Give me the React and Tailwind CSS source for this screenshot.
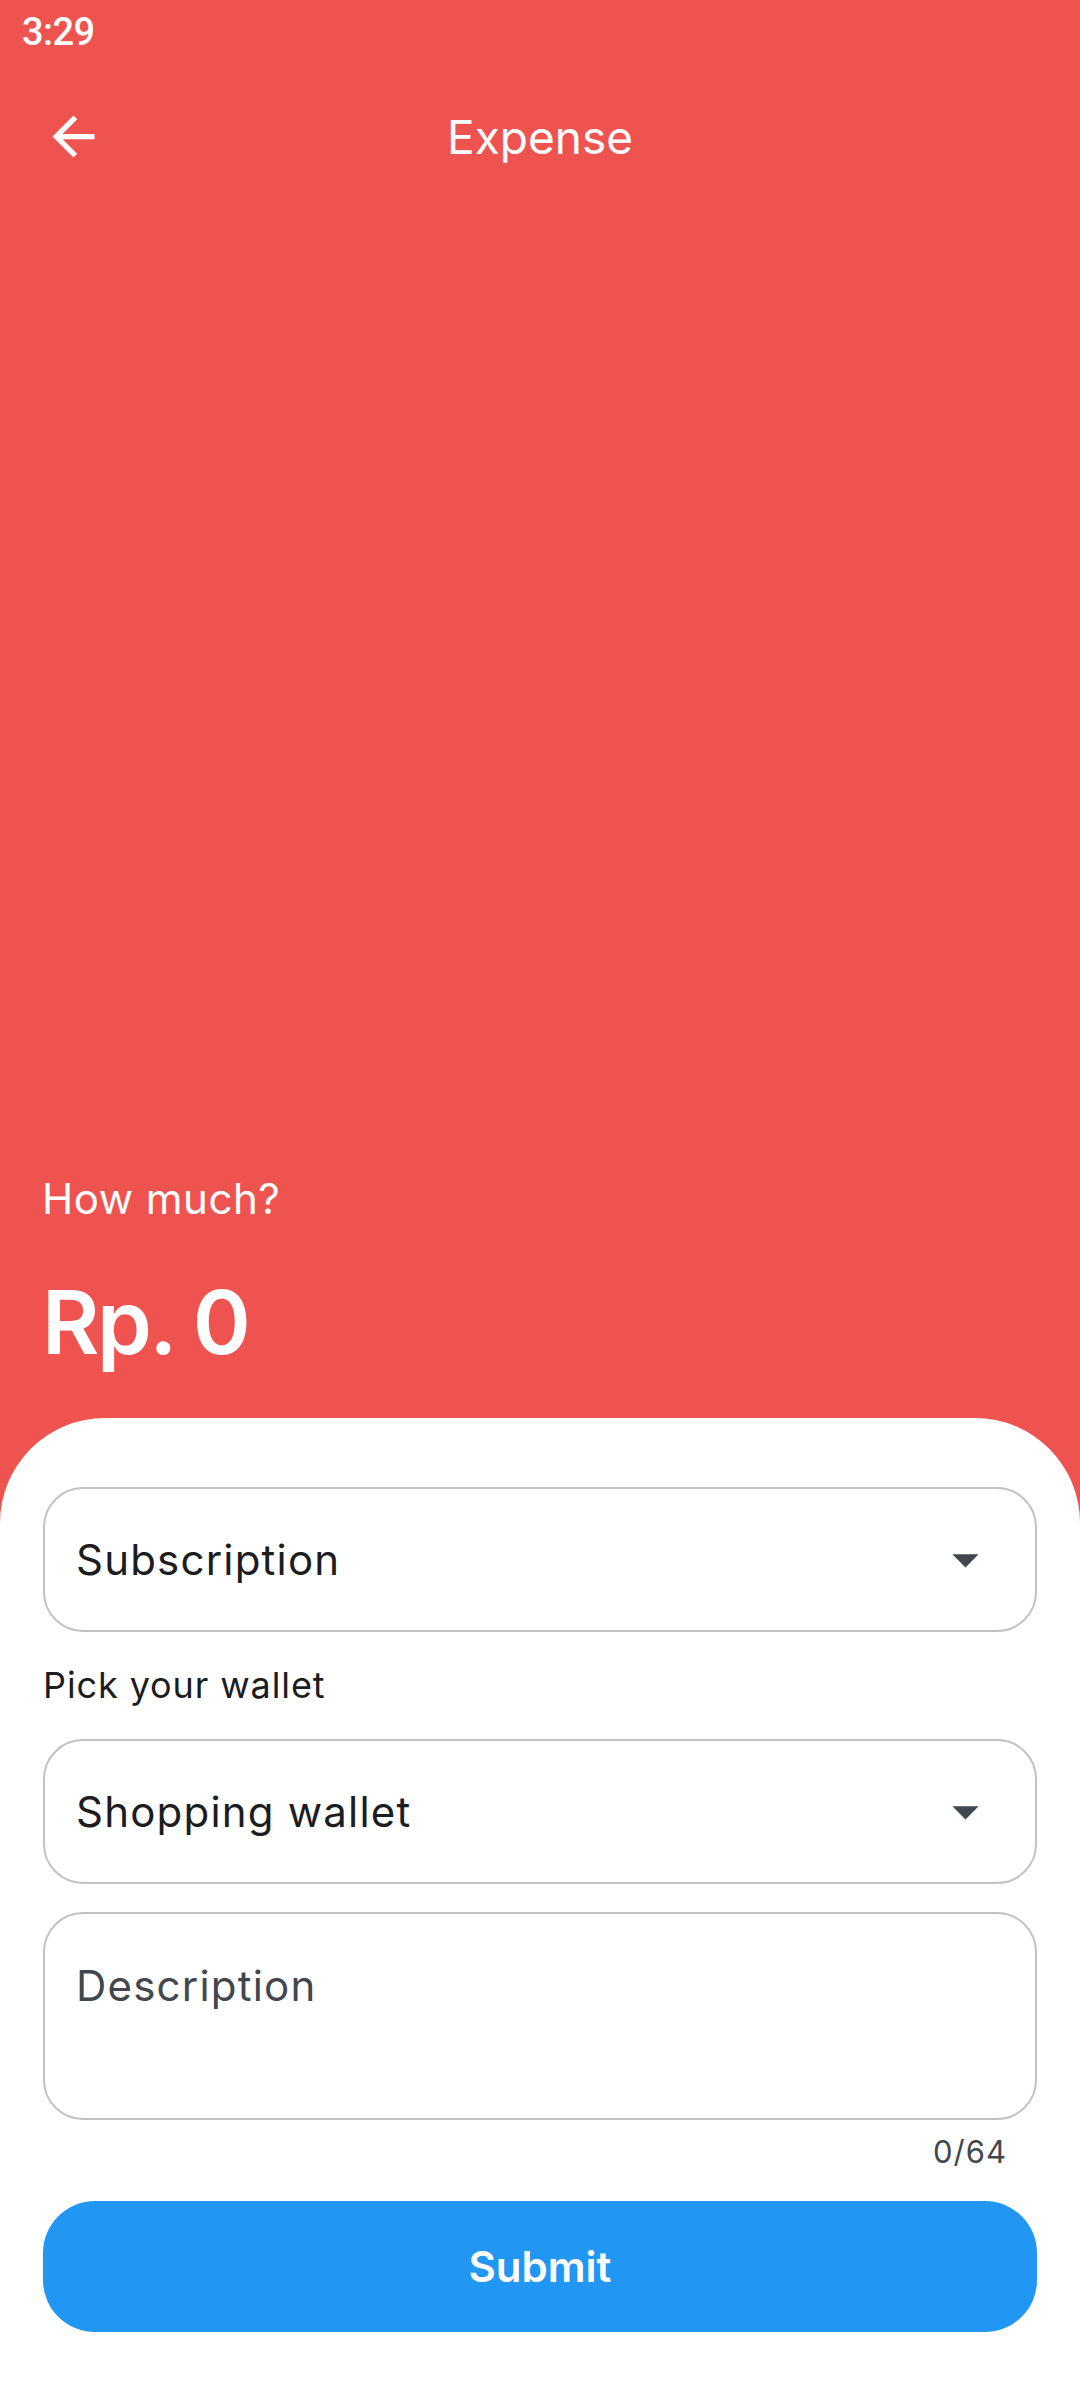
import React from "react";

function ArrowBack() {
  return (
    <svg width="63" height="63" viewBox="0 0 24 24" fill="#ffffff">
      <path d="M20 11H7.83l5.59-5.59L12 4l-8 8 8 8 1.41-1.41L7.83 13H20v-2z" />
    </svg>
  );
}

function DropArrow() {
  return (
    <svg width="63" height="63" viewBox="0 0 24 24" fill="#41484d">
      <path d="M7 10l5 5 5-5z" />
    </svg>
  );
}

function Dropdown({ label }) {
  return (
    <div className="h-[145px] border-[2.5px] border-[#c2c2c2] rounded-[40px] flex items-center justify-between pl-[31px] pr-[38px]">
      <span className="text-[42px] leading-[50px] tracking-[1.2px] text-[#1b1d1f]">{label}</span>
      <DropArrow />
    </div>
  );
}

export default function App() {
  return (
    <div className="w-[1080px] h-[2400px] flex flex-col bg-[#ef5350] overflow-hidden font-['Inter',sans-serif]">
      {/* status bar */}
      <div className="h-[63px] pl-[22px] pt-[12px] shrink-0">
        <span className="font-['Roboto',sans-serif] text-[38px] leading-[40px] font-medium tracking-[-0.6px] text-white">3:29</span>
      </div>
      {/* app bar */}
      <div className="h-[147px] shrink-0 grid grid-cols-[147px_1fr_147px] items-center">
        <div className="pl-[42px] flex items-center">
          <ArrowBack />
        </div>
        <div className="text-center text-white text-[46px] leading-[56px]">Expense</div>
        <div />
      </div>
      <div className="flex-1" />
      {/* amount */}
      <div className="px-[42px] pb-[43px] shrink-0 text-white">
        <div className="text-[42px] leading-[50px] tracking-[0.5px]">How much?</div>
        <div className="mt-[45px] text-[88px] leading-[106px] font-semibold tracking-[-2.5px]">Rp. 0</div>
      </div>
      {/* sheet */}
      <div className="shrink-0 bg-white rounded-t-[105px] px-[43px] pt-[69px] pb-[68px] flex flex-col">
        <Dropdown label="Subscription" />
        <div className="mt-[33px] text-[36px] leading-[41px] tracking-[0.9px] text-[#1b1d1f]">Pick your wallet</div>
        <div className="mt-[33px]">
          <Dropdown label="Shopping wallet" />
        </div>
        <div className="mt-[28px] h-[208px] border-[2.5px] border-[#c2c2c2] rounded-[40px] pl-[31px] pt-[47px]">
          <div className="text-[42px] leading-[50px] tracking-[1.2px] text-[#42474e]">Description</div>
        </div>
        <div className="mt-[14px] pr-[30px] text-right text-[31px] leading-[36px] tracking-[1px] text-[#42474e]">0/64</div>
        <button className="mt-[31px] h-[131px] rounded-[52px] bg-[#2196f3] flex items-center justify-center text-white text-[42px] font-semibold">
          Submit
        </button>
      </div>
    </div>
  );
}
